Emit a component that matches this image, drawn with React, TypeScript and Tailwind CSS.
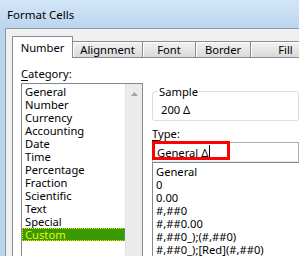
export default function App() {
  const cats = ["General", "Number", "Currency", "Accounting", "Date", "Time", "Percentage", "Fraction", "Scientific", "Text", "Special", "Custom"];
  const types = ["General", "0", "0.00", "#,##0", "#,##0.00", "#,##0_);(#,##0)", "#,##0_);[Red](#,##0)"];
  return (
    <div
      className="w-[299px] h-[256px] overflow-hidden bg-[#bcd4ec] text-[11.2px] leading-[13px] text-black flex flex-col"
      style={{ fontFamily: '"Noto Sans", "DejaVu Sans", sans-serif' }}
    >
      <div className="h-[28px] shrink-0 flex items-center pl-[7px] text-[11.5px] bg-gradient-to-b from-[#d3e6f8] to-[#bbd5ee]">
        Format Cells
      </div>
      <div className="flex-1 ml-[5px] border-l border-t border-[#8d99a8] bg-[#f0f0f0] pl-[6px] pt-[7px] flex flex-col min-w-0 min-h-0">
        <div className="flex items-end h-[21px] shrink-0">
          <div className="relative z-10 -mb-px h-[22px] w-[61px] shrink-0 border border-b-0 border-[#898c95] bg-white flex items-center justify-center pb-[1px]">
            Number
          </div>
          <div className="h-[16px] w-[70px] shrink-0 border-t border-r border-[#898c95] bg-gradient-to-b from-[#f2f2f2] to-[#d9d9d9] shadow-[inset_1px_1px_0_#fff] flex items-center justify-center">
            Alignment
          </div>
          <div className="h-[16px] w-[53px] shrink-0 border-t border-r border-[#898c95] bg-gradient-to-b from-[#f2f2f2] to-[#d9d9d9] shadow-[inset_1px_1px_0_#fff] flex items-center justify-center">
            Font
          </div>
          <div className="h-[16px] w-[55px] shrink-0 border-t border-r border-[#898c95] bg-gradient-to-b from-[#f2f2f2] to-[#d9d9d9] shadow-[inset_1px_1px_0_#fff] flex items-center justify-center">
            Border
          </div>
          <div className="h-[16px] w-[70px] shrink-0 border-t border-r border-[#898c95] bg-gradient-to-b from-[#f2f2f2] to-[#d9d9d9] shadow-[inset_1px_1px_0_#fff] flex items-center justify-center">
            Fill
          </div>
        </div>
        <div className="flex-1 border-l border-t border-[#898c95] bg-white flex pl-[8px] pt-[9px] min-h-0">
          <div className="w-[122px] shrink-0 flex flex-col">
            <div className="h-[13px]">
              <span className="underline underline-offset-[2px]">C</span>ategory:
            </div>
            <div className="mt-[3px] flex-1 border border-b-0 border-[#828790] flex min-h-0">
              <div className="w-[103px] pt-px flex flex-col">
                {cats.map((c) =>
                  c === "Custom" ? (
                    <div key={c} className="h-[13px] pl-[2px] bg-[#3a9900] border border-dotted border-[#e6f000] border-r-[#5b9be0] border-r-solid text-[#e6f51a] flex items-center">
                      {c}
                    </div>
                  ) : (
                    <div key={c} className="h-[13px] pl-[3px] flex items-center">
                      {c}
                    </div>
                  )
                )}
              </div>
              <div className="w-[17px] bg-[#ebebeb] border-l border-[#e2e2e2] flex justify-center pt-[8px]">
                <svg width="7" height="4" viewBox="0 0 7 4">
                  <path d="M0 4 L3.5 0 L7 4 Z" fill="#a3a3a3" />
                </svg>
              </div>
            </div>
          </div>
          <div className="ml-[9px] flex-1 flex flex-col min-w-0">
            <fieldset className="mt-[18px] border border-[#d5dfe5] rounded-[3px] pl-[5px] pr-0 pt-[5px] pb-[4px]">
              <legend className="px-px leading-[13px]">Sample</legend>
              <div className="pl-[3px] h-[13px] leading-[13px]">200 Δ</div>
            </fieldset>
            <div className="mt-[6px] h-[13px]">
              <span className="underline underline-offset-[2px]">T</span>ype:
            </div>
            <div className="relative mt-[2px] h-[20px] border border-[#abadb3] border-b-[#e3e9ef] flex items-center pl-[4px]">
              <span>General Δ</span>
              <span className="inline-block w-px h-[14px] bg-black ml-[1px]" />
              <div className="absolute -left-px -top-[2px] w-[78px] h-[19px] border-[3px] border-[#ff0000]" />
            </div>
            <div className="flex-1 border border-b-0 border-r-0 border-[#828790] pt-[2px] pl-[3px]">
              {types.map((t) => (
                <div key={t} className="h-[13px] flex items-center whitespace-nowrap">
                  {t}
                </div>
              ))}
            </div>
          </div>
        </div>
      </div>
    </div>
  );
}
